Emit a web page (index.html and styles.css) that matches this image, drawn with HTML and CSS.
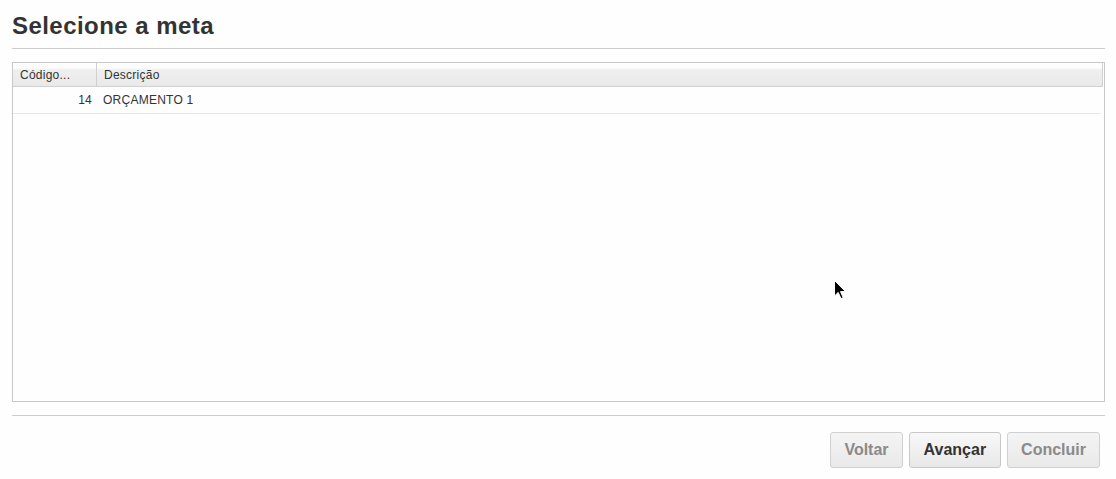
FILE: index.html
```html
<!DOCTYPE html>
<html lang="pt">
<head>
<meta charset="utf-8">
<title>Selecione a meta</title>
<link rel="stylesheet" href="styles.css">
</head>
<body>
<div class="page">
  <h1 class="title">Selecione a meta</h1>
  <div class="grid">
    <div class="grid-head">
      <div class="cell col-code">Código...</div>
      <div class="cell col-desc">Descrição</div>
    </div>
    <div class="grid-body">
      <div class="grid-row">
        <div class="cell col-code num">14</div>
        <div class="cell col-desc">ORÇAMENTO 1</div>
      </div>
    </div>
  </div>
  <div class="footer">
    <button class="btn disabled">Voltar</button>
    <button class="btn wide">Avançar</button>
    <button class="btn disabled">Concluir</button>
  </div>
</div>
<svg class="cursor" width="13" height="20" viewBox="0 0 13 20"><path d="M0.5 0.5 L0.5 16 L4.2 12.4 L7 18.6 L9.2 17.6 L6.5 11.6 L11.5 11.6 Z" fill="#000" stroke="#fff" stroke-width="1"/></svg>
</body>
</html>
```
FILE: styles.css
```css
html, body {
  margin: 0;
  padding: 0;
  background: #fefefe;
}
body {
  font-family: "Liberation Sans", Arial, sans-serif;
  color: #333;
  position: relative;
  width: 1116px;
  height: 479px;
  overflow: hidden;
}
.page {
  padding: 12px 11px 0 12px;
}
.title {
  margin: 0;
  font-size: 24px;
  line-height: 28px;
  font-weight: bold;
  letter-spacing: 0.45px;
  color: #333;
  padding-bottom: 8px;
  border-bottom: 1px solid #cccccc;
}
.grid {
  margin-top: 13px;
  border: 1px solid #c8c8c8;
  height: 338px;
  display: flex;
  flex-direction: column;
}
.grid-head {
  display: flex;
  height: 23px;
  border-bottom: 1px solid #d0d0d0;
  background: linear-gradient(#fdfdfd 0, #fdfdfd 5px, #efefef 7px, #e9e9ea 100%);
  margin-right: 1px;
  border-right: 1px solid #d0d0d0;
}
.cell {
  font-size: 12px;
  line-height: 22px;
  padding-top: 1px;
  letter-spacing: 0.25px;
  color: #333;
  box-sizing: border-box;
  white-space: nowrap;
}
.grid-head .col-code {
  width: 84px;
  padding-left: 7px;
  border-right: 1px solid #d0d0d0;
}
.grid-head .col-desc {
  flex: 1;
  padding-left: 7px;
}
.grid-body {
  flex: 1;
}
.grid-row {
  display: flex;
  height: 26px;
  border-bottom: 1px solid #e6e6e6;
  margin-right: 3px;
}
.grid-row .cell {
  line-height: 25px;
}
.grid-row .col-code {
  width: 84px;
  padding-right: 5px;
  text-align: right;
}
.grid-row .col-desc {
  flex: 1;
  padding-left: 6px;
}
.footer {
  margin-top: 13px;
  border-top: 1px solid #cccccc;
  padding-top: 16px;
  padding-right: 5px;
  display: flex;
  justify-content: flex-end;
  gap: 6px;
}
.btn {
  height: 36px;
  padding: 0 13px;
  font-family: "Liberation Sans", Arial, sans-serif;
  font-size: 16px;
  font-weight: bold;
  color: #333;
  background: linear-gradient(#f8f8f8, #e8e8e8);
  border: 1px solid #c8c8c8;
  border-radius: 3px;
}
.btn.wide {
  padding: 0 14px;
}
.btn.disabled {
  color: #8a8a8a;
  background: linear-gradient(#f4f4f4, #e9e9e9);
  border-color: #d0d0d0;
}
.cursor {
  position: absolute;
  left: 834px;
  top: 280px;
}
```
